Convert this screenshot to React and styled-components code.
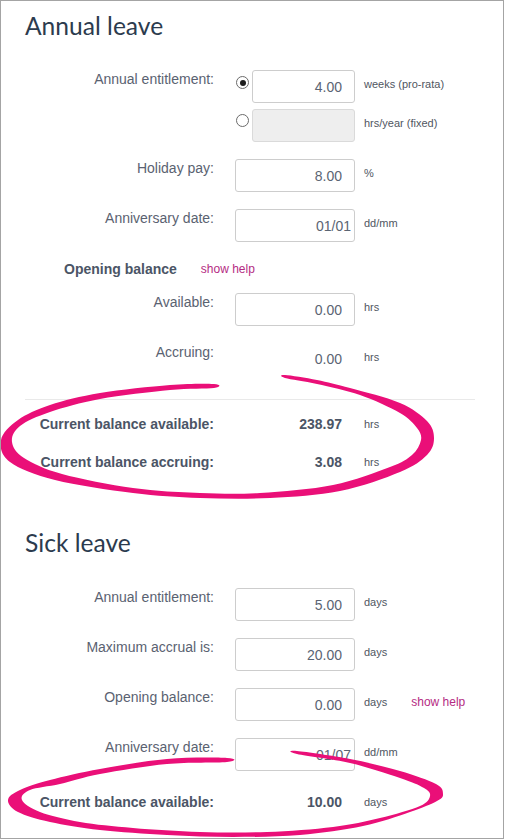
import React from "react";
import styled, { createGlobalStyle } from "styled-components";

const GlobalStyle = createGlobalStyle`
  html, body { margin: 0; padding: 0; background: #ffffff; }
  body { font-family: "Liberation Sans", Arial, sans-serif; }
`;

const Frame = styled.div`
  position: relative;
  width: 504px;
  height: 839px;
  box-sizing: border-box;
  border: 1px solid #a4a4a4;
  padding-left: 24px;
  overflow: hidden;
`;

const Section = styled.section`
  display: flex;
  flex-direction: column;
  margin-top: ${(p) => p.$top || 0}px;
`;

const Heading = styled.h2`
  margin: ${(p) => p.$top || 0}px 0 0 0;
  font-family: Lato, "Open Sans", sans-serif;
  font-weight: 400;
  font-size: 24.6px;
  line-height: 30px;
  color: #2c3b4e;
`;

const Rows = styled.div`
  display: flex;
  flex-direction: column;
  gap: 17px;
  margin-top: ${(p) => p.$top || 0}px;
`;

const RadioGroup = styled.div`
  display: flex;
  flex-direction: column;
  gap: 6px;
`;

const Row = styled.div`
  display: flex;
  align-items: flex-start;
  min-height: 33px;
`;

const Label = styled.div`
  width: 189px;
  flex: none;
  text-align: right;
  font-size: 14px;
  line-height: 18px;
  color: #5a6271;
`;

const Field = styled.div`
  margin-left: 21px;
  width: 120px;
  flex: none;
  display: flex;
  align-items: flex-start;
`;

const Radio = styled.input.attrs({ type: "radio" })`
  appearance: none;
  -webkit-appearance: none;
  flex: none;
  width: 13px;
  height: 13px;
  margin: ${(p) => (p.$second ? 5 : 6)}px 3px 0 1px;
  box-sizing: border-box;
  border: 1px solid #6b6b6b;
  border-radius: 50%;
  background: #ffffff;
  position: relative;
  &:checked::after {
    content: "";
    position: absolute;
    left: 2.5px;
    top: 2.5px;
    width: 6px;
    height: 6px;
    border-radius: 50%;
    background: #1e1e1e;
  }
`;

const TextInput = styled.input`
  box-sizing: border-box;
  flex: 1;
  min-width: 0;
  width: 100%;
  height: 33px;
  margin: 0;
  border: 1px solid #cdcdcd;
  border-radius: 3px;
  background: #ffffff;
  padding: 0 ${(p) => (p.$date ? 3 : 12)}px 0 4px;
  font-family: "Liberation Sans", Arial, sans-serif;
  font-size: 14px;
  color: #5b6473;
  text-align: right;
  outline: none;
  &:disabled {
    background: #eeeeee;
    border-color: #dadada;
  }
`;

const StaticValue = styled.div`
  width: 100%;
  height: 33px;
  line-height: 33px;
  box-sizing: border-box;
  padding-right: 13px;
  text-align: right;
  font-size: 14px;
  color: #5b6473;
`;

const Unit = styled.span`
  margin-left: 9px;
  font-size: 11px;
  line-height: ${(p) => (p.$inline ? 18 : 28)}px;
  color: #50565f;
  white-space: nowrap;
`;

const HelpLink = styled.a`
  margin-left: ${(p) => p.$gap || 24}px;
  font-size: 12px;
  line-height: ${(p) => p.$lh || 18}px;
  color: #b52b83;
  text-decoration: none;
  white-space: nowrap;
`;

const SubHeading = styled.div`
  display: flex;
  align-items: center;
  margin: 18px 0 15px 39px;
  height: 18px;
`;

const SubTitle = styled.span`
  font-weight: 700;
  font-size: 14px;
  line-height: 18px;
  color: #4b5566;
`;

const Divider = styled.hr`
  width: 450px;
  height: 1px;
  border: 0;
  margin: 23px 0 0 0;
  background: #e9e9e9;
`;

const Balances = styled.div`
  display: flex;
  flex-direction: column;
  gap: 20px;
  margin-top: ${(p) => p.$top || 0}px;
`;

const BalanceRow = styled.div`
  display: flex;
  align-items: center;
  height: 18px;
`;

const BalanceLabel = styled.div`
  width: 189px;
  flex: none;
  text-align: right;
  font-weight: 700;
  font-size: 14px;
  line-height: 18px;
  color: #4b5566;
`;

const BalanceValue = styled.div`
  margin-left: 21px;
  width: 120px;
  flex: none;
  box-sizing: border-box;
  padding-right: 13px;
  text-align: right;
  font-weight: 700;
  font-size: 14px;
  line-height: 18px;
  color: #4b5566;
`;

const Overlay = styled.svg`
  position: absolute;
  left: -1px;
  top: -1px;
  width: 505px;
  height: 839px;
  pointer-events: none;
  overflow: visible;
`;

function smoothClosed(pts) {
  const n = pts.length;
  let d = `M${pts[0][0]} ${pts[0][1]}`;
  for (let i = 0; i < n; i++) {
    const p0 = pts[(i - 1 + n) % n];
    const p1 = pts[i];
    const p2 = pts[(i + 1) % n];
    const p3 = pts[(i + 2) % n];
    const c1 = [p1[0] + (p2[0] - p0[0]) / 6, p1[1] + (p2[1] - p0[1]) / 6];
    const c2 = [p2[0] - (p3[0] - p1[0]) / 6, p2[1] - (p3[1] - p1[1]) / 6];
    d += ` C${c1[0].toFixed(1)} ${c1[1].toFixed(1)} ${c2[0].toFixed(1)} ${c2[1].toFixed(1)} ${p2[0]} ${p2[1]}`;
  }
  return d + " Z";
}

const loopAnnual = [
  [214, 384], [170, 385], [100, 393], [50, 405], [18, 420], [1, 440], [10, 462],
  [55, 480], [133, 493], [200, 498], [270, 498], [340, 491], [400, 472], [427, 455],
  [434, 438], [427, 421], [400, 403], [350, 388], [317, 380], [285, 375],
  [285, 378], [317, 384], [360, 395], [400, 413], [417, 428], [421, 440], [412, 455],
  [390, 467], [333, 485], [260, 493], [200, 493], [133, 488], [62, 474], [24, 458],
  [12, 442], [20, 426], [50, 412], [100, 399], [170, 390], [214, 388],
];

const loopSick = [
  [227, 758], [167, 759], [100, 769], [50, 780], [20, 790], [8, 800], [18, 812],
  [50, 822], [100, 830], [167, 835], [233, 837], [300, 835], [363, 826], [410, 812],
  [437, 801], [443, 794], [436, 784], [400, 771], [350, 759], [297, 751],
  [297, 754], [350, 763], [400, 778], [424, 788], [430, 796], [420, 806], [380, 818],
  [333, 827], [267, 832], [200, 832], [133, 828], [80, 822], [40, 812], [22, 800],
  [30, 790], [60, 784], [100, 774], [167, 764], [227, 762],
];

function InputRow({ label, value, unit, date, help }) {
  return (
    <Row>
      <Label>{label}</Label>
      <Field>
        <TextInput readOnly value={value} $date={date} />
      </Field>
      <Unit>{unit}</Unit>
      {help && (
        <HelpLink href="#" $lh={28}>
          show help
        </HelpLink>
      )}
    </Row>
  );
}

export default function App() {
  return (
    <>
      <GlobalStyle />
      <Frame>
        <Section>
          <Heading $top={10}>Annual leave</Heading>
          <Rows $top={29}>
            <RadioGroup>
              <Row>
                <Label>Annual entitlement:</Label>
                <Field>
                  <Radio name="ent" defaultChecked />
                  <TextInput readOnly value="4.00" />
                </Field>
                <Unit>weeks (pro-rata)</Unit>
              </Row>
              <Row>
                <Label />
                <Field>
                  <Radio name="ent" $second />
                  <TextInput disabled value="" readOnly />
                </Field>
                <Unit>hrs/year (fixed)</Unit>
              </Row>
            </RadioGroup>
            <InputRow label="Holiday pay:" value="8.00" unit="%" />
            <InputRow label="Anniversary date:" value="01/01" unit="dd/mm" date />
          </Rows>
          <SubHeading>
            <SubTitle>Opening balance</SubTitle>
            <HelpLink href="#">show help</HelpLink>
          </SubHeading>
          <Rows>
            <InputRow label="Available:" value="0.00" unit="hrs" />
            <Row>
              <Label>Accruing:</Label>
              <Field>
                <StaticValue>0.00</StaticValue>
              </Field>
              <Unit>hrs</Unit>
            </Row>
          </Rows>
          <Divider />
          <Balances $top={15}>
            <BalanceRow>
              <BalanceLabel>Current balance available:</BalanceLabel>
              <BalanceValue>238.97</BalanceValue>
              <Unit $inline>hrs</Unit>
            </BalanceRow>
            <BalanceRow>
              <BalanceLabel>Current balance accruing:</BalanceLabel>
              <BalanceValue>3.08</BalanceValue>
              <Unit $inline>hrs</Unit>
            </BalanceRow>
          </Balances>
        </Section>

        <Section $top={57}>
          <Heading>Sick leave</Heading>
          <Rows $top={30}>
            <InputRow label="Annual entitlement:" value="5.00" unit="days" />
            <InputRow label="Maximum accrual is:" value="20.00" unit="days" />
            <InputRow label="Opening balance:" value="0.00" unit="days" help />
            <InputRow label="Anniversary date:" value="01/07" unit="dd/mm" date />
          </Rows>
          <Balances $top={22}>
            <BalanceRow>
              <BalanceLabel>Current balance available:</BalanceLabel>
              <BalanceValue>10.00</BalanceValue>
              <Unit $inline>days</Unit>
            </BalanceRow>
          </Balances>
        </Section>

        <Overlay viewBox="0 0 505 839">
          <path d={smoothClosed(loopAnnual)} fill="#ea0f78" />
          <path d={smoothClosed(loopSick)} fill="#ea0f78" />
        </Overlay>
      </Frame>
    </>
  );
}
